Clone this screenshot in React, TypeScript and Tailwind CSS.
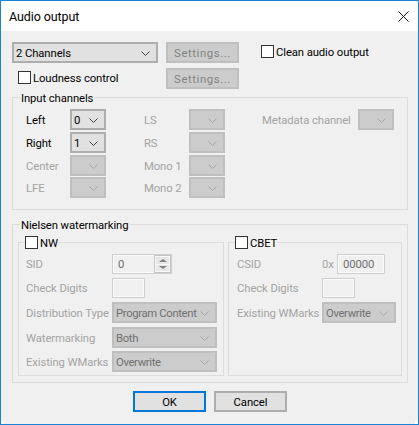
import React from "react";

const Chevron = ({ dim }: { dim?: boolean }) => (
  <svg width="9" height="5" viewBox="0 0 9 5" className="absolute right-[6px] top-[7px]" fill="none">
    <path d="M0.5 0.5 L4.5 4.5 L8.5 0.5" stroke={dim ? "#a6a6a6" : "#404040"} strokeWidth="1" />
  </svg>
);

const Combo = ({ text, className = "", enabled }: { text?: string; className?: string; enabled?: boolean }) => (
  <div
    className={
      "relative shrink-0 h-[21px] border-2 flex items-center pl-[2px] pt-[2px] " +
      (enabled ? "bg-[#e1e1e1] border-[#adadad] text-black " : "bg-[#cccccc] border-[#bfbfbf] text-[#707070] tracking-[-0.35px] ") +
      className
    }
  >
    <span className="whitespace-nowrap">{text}</span>
    <Chevron dim={!enabled} />
  </div>
);

const Check = ({ label, className = "" }: { label: string; className?: string }) => (
  <div className={"flex items-center gap-[2px] h-[13px] " + className}>
    <div className="w-[13px] h-[13px] bg-white border border-[#333333] shrink-0" />
    <span className="whitespace-nowrap text-black leading-none pt-[2px]">{label}</span>
  </div>
);

const Settings = () => (
  <div className="w-[73px] h-[21px] pt-[2px] bg-[#cccccc] border-2 border-[#bfbfbf] text-[#838383] flex items-center justify-center tracking-[0.6px]">
    Settings...
  </div>
);

const Legend = ({ children, className = "" }: { children: React.ReactNode; className?: string }) => (
  <div className={"absolute top-[-7px] bg-[#f0f0f0] leading-none h-[13px] flex items-center px-[1px] text-black " + className}>
    {children}
  </div>
);

const Dim = ({ children, className = "" }: { children: React.ReactNode; className?: string }) => (
  <span className={"text-[#a3a3a3] whitespace-nowrap pt-[2px] " + className}>{children}</span>
);

const ChannelRow = ({
  left,
  right,
  value,
  enabled,
  className = "",
  extra,
}: {
  left: string;
  right: string;
  value?: string;
  enabled?: boolean;
  className?: string;
  extra?: boolean;
}) => (
  <div className={"flex items-center h-[21px] " + className}>
    <span className={"w-[44px] shrink-0 pt-[2px] " + (enabled ? "text-black" : "text-[#a3a3a3]")}>{left}</span>
    <Combo text={value} enabled={enabled} className="w-[36px]" />
    <Dim className="ml-[38px] w-[45px]">{right}</Dim>
    <Combo className="w-[36px]" />
    {extra && (
      <>
        <Dim className="ml-[37px] w-[96px]">Metadata channel</Dim>
        <Combo className="w-[36px]" />
      </>
    )}
  </div>
);

const Field = ({ label, children, labelW, className = "" }: { label: string; children: React.ReactNode; labelW: string; className?: string }) => (
  <div className={"flex items-center " + className}>
    <Dim className={"shrink-0 " + labelW}>{label}</Dim>
    {children}
  </div>
);

const Input = ({ className = "", text }: { className?: string; text?: string }) => (
  <div className={"h-[20px] bg-[#f0f0f0] border border-[#cfcfcf] shadow-[inset_0_0_0_1px_#fbfbfb] text-[#6d6d6d] flex items-center pl-[5px] pt-[2px] shrink-0 " + className}>
    {text}
  </div>
);

export default function App() {
  return (
    <div
      className="relative w-[419px] h-[425px] bg-[#f0f0f0] border border-[#1883d7] flex flex-col overflow-hidden text-[11.3px] tracking-[-0.1px] leading-none"
      style={{ fontFamily: 'Roboto, "Noto Sans", sans-serif' }}
    >
      <div className="absolute left-0 top-[-1px] w-[3px] h-[3px] bg-white" />
      <div className="absolute right-0 top-[-1px] w-[3px] h-[3px] bg-white" />
      <div className="absolute left-[-1px] bottom-[-1px] w-[4px] h-[4px] bg-white" />
      <div className="absolute right-[-1px] bottom-[-1px] w-[4px] h-[4px] bg-white" />

      <div className="h-[30px] bg-white flex items-center justify-between pl-[8px] pr-[9px] shrink-0">
        <span className="text-[12.5px] text-black pt-[2px]">Audio output</span>
        <svg width="11" height="11" viewBox="0 0 11 11" fill="none">
          <path d="M0.5 0.5 L10.5 10.5 M10.5 0.5 L0.5 10.5" stroke="#111" strokeWidth="1" />
        </svg>
      </div>

      <div className="flex-1 pl-[11px] pt-[11px] flex flex-col">
        <div className="flex h-[47px]">
          <div className="w-[146px] flex flex-col">
            <Combo text="2 Channels" enabled className="w-[146px]" />
            <Check label="Loudness control" className="ml-[6px] mt-[8px]" />
          </div>
          <div className="ml-[8px] flex flex-col gap-[5px]">
            <Settings />
            <Settings />
          </div>
          <Check label="Clean audio output" className="ml-[22px] mt-[3px]" />
        </div>

        <div className="relative mt-[8px] w-[396px] h-[113px] border border-[#dcdcdc] pl-[13px] pt-[11px] flex flex-col">
          <Legend className="left-[7px] pt-[2px]">Input channels</Legend>
          <ChannelRow left="Left" right="LS" value="0" enabled extra />
          <ChannelRow left="Right" right="RS" value="1" enabled className="mt-[2px]" />
          <ChannelRow left="Center" right="Mono 1" className="mt-[2px]" />
          <ChannelRow left="LFE" right="Mono 2" className="mt-[1px]" />
        </div>

        <div className="relative mt-[14px] w-[396px] h-[159px] border border-[#dcdcdc] pl-[5px] pt-[17px] flex gap-[4px]">
          <Legend className="left-[7px] pt-[2px]">Nielsen watermarking</Legend>

          <div className="relative w-[206px] h-[134px] border border-[#dcdcdc] pl-[7px] pt-[11px] flex flex-col">
            <Legend className="left-[6px] !px-0 gap-[2px]">
              <Check label="NW" />
            </Legend>
            <Field label="SID" labelW="w-[86px]">
              <div className="relative w-[60px] h-[20px] bg-[#f0f0f0] border border-[#cfcfcf] shadow-[inset_0_0_0_1px_#fbfbfb] flex items-center pl-[5px] pt-[2px] text-[#6d6d6d] shrink-0">
                0
                <div className="absolute right-0 top-0 bottom-0 w-[17px] border border-[#c4c4c4] flex flex-col gap-[1px] bg-[#f8f8f8] p-[1px]">
                  <div className="flex-1 bg-[#e6e6e6] flex items-center justify-center">
                    <div className="w-0 h-0 border-x-[4px] border-x-transparent border-b-[3px] border-b-[#808080]" />
                  </div>
                  <div className="flex-1 bg-[#e6e6e6] flex items-center justify-center">
                    <div className="w-0 h-0 border-x-[4px] border-x-transparent border-t-[3px] border-t-[#808080]" />
                  </div>
                </div>
              </div>
            </Field>
            <Field label="Check Digits" labelW="w-[86px]" className="mt-[4px]">
              <Input className="w-[33px]" />
            </Field>
            <Field label="Distribution Type" labelW="w-[86px]" className="mt-[4px]">
              <Combo text="Program Content" className="w-[105px]" />
            </Field>
            <Field label="Watermarking" labelW="w-[86px]" className="mt-[4px]">
              <Combo text="Both" className="w-[105px]" />
            </Field>
            <Field label="Existing WMarks" labelW="w-[86px]" className="mt-[3px]">
              <Combo text="Overwrite" className="w-[105px]" />
            </Field>
          </div>

          <div className="relative w-[174px] h-[134px] border border-[#dcdcdc] pl-[8px] pt-[11px] flex flex-col">
            <Legend className="left-[6px] !px-0">
              <Check label="CBET" />
            </Legend>
            <Field label="CSID" labelW="w-[85px]">
              <Dim className="w-[15px]">0x</Dim>
              <Input className="w-[48px]" text="00000" />
            </Field>
            <Field label="Check Digits" labelW="w-[85px]" className="mt-[4px]">
              <Input className="w-[33px]" />
            </Field>
            <Field label="Existing WMarks" labelW="w-[85px]" className="mt-[4px]">
              <Combo text="Overwrite" className="w-[74px]" />
            </Field>
          </div>
        </div>

        <div className="mt-[8px] flex pl-[121px] gap-[8px]">
          <div className="w-[73px] h-[21px] pt-[2px] bg-[#e1e1e1] border-2 border-[#0078d7] flex items-center justify-center text-black">OK</div>
          <div className="w-[73px] h-[21px] pt-[2px] bg-[#e1e1e1] border-2 border-[#adadad] flex items-center justify-center text-black">Cancel</div>
        </div>
      </div>
    </div>
  );
}
